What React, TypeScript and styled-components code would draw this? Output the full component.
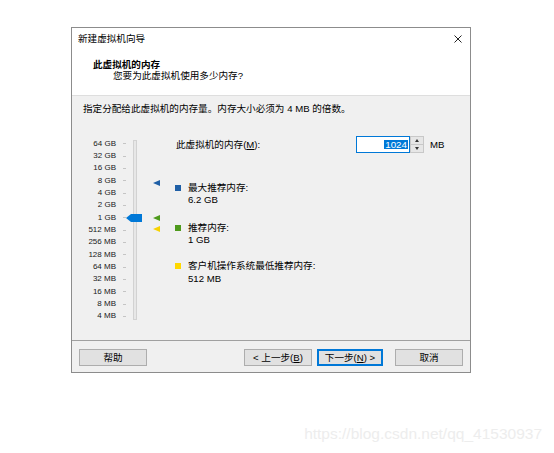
import styled, { createGlobalStyle } from "styled-components";

const GlobalStyle = createGlobalStyle`
  html, body {
    margin: 0;
    padding: 0;
    background: #fff;
  }
  body {
    font-family: "Liberation Sans", "Noto Sans CJK SC", sans-serif;
    font-size: 9.6px;
    color: #000;
  }
`;

const Page = styled.div`
  width: 554px;
  height: 453px;
  box-sizing: border-box;
  padding: 27px 0 0 71px;
  display: flex;
  flex-direction: column;
  overflow: hidden;
`;

const Dialog = styled.div`
  width: 400px;
  height: 346px;
  box-sizing: border-box;
  border: 1px solid #8c8c8c;
  background: #fff;
  display: flex;
  flex-direction: column;
`;

const TitleBar = styled.div`
  height: 21px;
  display: flex;
  align-items: center;
  padding: 0 8px 0 6px;
  line-height: 12px;
  flex-shrink: 0;
`;

const CloseIcon = styled.svg`
  margin-left: auto;
  width: 8px;
  height: 8px;
`;

const Header = styled.div`
  height: 47px;
  box-sizing: border-box;
  border-bottom: 1px solid #dedede;
  padding: 10px 0 0 21px;
  flex-shrink: 0;
`;

const HeaderTitle = styled.div`
  font-weight: bold;
  line-height: 11px;
`;

const HeaderSub = styled.div`
  line-height: 11px;
  padding-left: 20px;
`;

const Body = styled.div`
  height: 244px;
  flex-shrink: 0;
  box-sizing: border-box;
  background: #f0f0f0;
  padding: 6px 0 0 11px;
`;

const Instruction = styled.div`
  line-height: 14px;
`;

const Main = styled.div`
  display: flex;
  margin-top: 14px;
`;

const Slider = styled.div`
  position: relative;
  width: 92px;
  flex-shrink: 0;
  display: flex;
  align-items: flex-start;
`;

const Labels = styled.div`
  width: 33px;
  padding-top: 7.8px;
  display: flex;
  flex-direction: column;
`;

const ScaleLabel = styled.div`
  height: 12.34px;
  line-height: 12.34px;
  font-size: 8px;
  text-align: right;
  color: #1a1a1a;
  white-space: nowrap;
`;

const Ticks = styled.div`
  width: 3px;
  margin-left: 7px;
  padding-top: 7.8px;
  display: flex;
  flex-direction: column;
`;

const Tick = styled.div`
  height: 12.34px;
  display: flex;
  align-items: center;
  &::before {
    content: "";
    width: 3px;
    height: 1px;
    background: #c4c4c4;
  }
`;

const Track = styled.div`
  width: 4px;
  height: 180px;
  margin: 10px 0 0 7px;
  box-sizing: border-box;
  background: #e7e7e7;
  border: 1px solid #d2d2d2;
`;

const Thumb = styled.svg`
  position: absolute;
  left: 43px;
  width: 16px;
  height: 8px;
`;

const Marker = styled.svg`
  position: absolute;
  left: 70px;
  width: 7px;
  height: 6px;
`;

const Panel = styled.div`
  flex: 1;
  display: flex;
  flex-direction: column;
`;

const MemRow = styled.div`
  display: grid;
  grid-template-columns: 181px 54px 14px auto;
  align-items: center;
  height: 17px;
  margin-top: 6px;
`;

const MemLabel = styled.div`
  padding-left: 1px;
  line-height: 12px;
`;

const U = styled.span`
  text-decoration: underline;
`;

const Input = styled.div`
  height: 17px;
  box-sizing: border-box;
  border: 1px solid #0078d7;
  background: #fff;
  display: flex;
  align-items: center;
  justify-content: flex-end;
  padding-right: 1px;
`;

const Selected = styled.span`
  background: #0078d7;
  color: #fff;
  line-height: 9.5px;
  font-size: 9.8px;
  padding: 0 1px;
`;

const Spin = styled.div`
  height: 17px;
  display: flex;
  flex-direction: column;
`;

const SpinBtn = styled.div<{ $up?: boolean }>`
  flex: 1;
  box-sizing: border-box;
  background: #e6e6e6;
  border: 1px solid #c8c8c8;
  border-top-width: ${(p) => (p.$up ? "1px" : "0")};
  display: flex;
  align-items: center;
  justify-content: center;
  &::before {
    content: "";
    border-left: 2.5px solid transparent;
    border-right: 2.5px solid transparent;
    ${(p) =>
      p.$up
        ? "border-bottom: 3px solid #333;"
        : "border-top: 3px solid #333;"}
  }
`;

const Unit = styled.div`
  margin-left: 6px;
  line-height: 12px;
`;

const LegendItem = styled.div<{ $top: number }>`
  display: flex;
  gap: 7px;
  margin-top: ${(p) => p.$top}px;
`;

const Swatch = styled.div<{ $color: string }>`
  width: 6px;
  height: 6px;
  margin-top: 3px;
  background: ${(p) => p.$color};
  flex-shrink: 0;
`;

const LegendText = styled.div`
  line-height: 12.4px;
`;

const Footer = styled.div`
  height: 32px;
  flex-shrink: 0;
  box-sizing: border-box;
  border-top: 1px solid #a0a0a0;
  background: #f0f0f0;
  display: flex;
  align-items: flex-start;
  padding: 8px 7px 0 7px;
`;

const Button = styled.div<{ $w: number; $gap?: number; $primary?: boolean }>`
  width: ${(p) => p.$w}px;
  height: 17px;
  box-sizing: border-box;
  margin-left: ${(p) => p.$gap ?? 0}px;
  background: #e1e1e1;
  border: 1px solid ${(p) => (p.$primary ? "#0078d7" : "#adadad")};
  box-shadow: ${(p) => (p.$primary ? "inset 0 0 0 1px #0078d7" : "none")};
  display: flex;
  align-items: center;
  justify-content: center;
  line-height: 12px;
  white-space: nowrap;
`;

const Spacer = styled.div`
  flex: 1;
`;

const Watermark = styled.div`
  align-self: flex-end;
  margin: 52px 12px 0 0;
  font-family: "Liberation Sans", Arial, sans-serif;
  font-size: 15.5px;
  line-height: 18px;
  color: #ededed;
`;

const scale = [
  "64 GB",
  "32 GB",
  "16 GB",
  "8 GB",
  "4 GB",
  "2 GB",
  "1 GB",
  "512 MB",
  "256 MB",
  "128 MB",
  "64 MB",
  "32 MB",
  "16 MB",
  "8 MB",
  "4 MB",
];

// slider origin is at page y=130
const sliderTop = 130;
const markers = [
  { y: 182.7, color: "#1f5fa6" },
  { y: 218, color: "#4e9a1c" },
  { y: 229, color: "#f7d200" },
];
const thumbY = 144 + 6 * 12.34;

export default function App() {
  return (
    <Page>
      <GlobalStyle />
      <Dialog>
        <TitleBar>
          新建虚拟机向导
          <CloseIcon viewBox="0 0 8 8">
            <path d="M0.5 0.5 L7.5 7.5 M7.5 0.5 L0.5 7.5" stroke="#222" strokeWidth="1" />
          </CloseIcon>
        </TitleBar>
        <Header>
          <HeaderTitle>此虚拟机的内存</HeaderTitle>
          <HeaderSub>您要为此虚拟机使用多少内存?</HeaderSub>
        </Header>
        <Body>
          <Instruction>指定分配给此虚拟机的内存量。内存大小必须为 4 MB 的倍数。</Instruction>
          <Main>
            <Slider>
              <Labels>
                {scale.map((s) => (
                  <ScaleLabel key={s}>{s}</ScaleLabel>
                ))}
              </Labels>
              <Ticks>
                {scale.map((s) => (
                  <Tick key={s} />
                ))}
              </Ticks>
              <Track />
              {markers.map((m) => (
                <Marker key={m.color} viewBox="0 0 7 6" style={{ top: m.y - sliderTop - 3 }}>
                  <polygon points="0,3 7,0 7,6" fill={m.color} />
                </Marker>
              ))}
              <Thumb viewBox="0 0 16 8" style={{ top: thumbY - sliderTop - 4 }}>
                <polygon points="0,4 5,0 16,0 16,8 5,8" fill="#0078d7" />
              </Thumb>
            </Slider>
            <Panel>
              <MemRow>
                <MemLabel>
                  此虚拟机的内存(<U>M</U>):
                </MemLabel>
                <Input>
                  <Selected>1024</Selected>
                </Input>
                <Spin>
                  <SpinBtn $up />
                  <SpinBtn />
                </Spin>
                <Unit>MB</Unit>
              </MemRow>
              <LegendItem $top={29}>
                <Swatch $color="#1f5fa6" />
                <LegendText>
                  最大推荐内存:
                  <br />
                  6.2 GB
                </LegendText>
              </LegendItem>
              <LegendItem $top={15.2}>
                <Swatch $color="#4e9a1c" />
                <LegendText>
                  推荐内存:
                  <br />1 GB
                </LegendText>
              </LegendItem>
              <LegendItem $top={13.6}>
                <Swatch $color="#ffd800" />
                <LegendText>
                  客户机操作系统最低推荐内存:
                  <br />
                  512 MB
                </LegendText>
              </LegendItem>
            </Panel>
          </Main>
        </Body>
        <Footer>
          <Button $w={68}>帮助</Button>
          <Spacer />
          <Button $w={68}>
            &lt; 上一步(<U>B</U>)
          </Button>
          <Button $w={66} $gap={5} $primary>
            下一步(<U>N</U>) &gt;
          </Button>
          <Button $w={68} $gap={12}>
            取消
          </Button>
        </Footer>
      </Dialog>
      <Watermark>https://blog.csdn.net/qq_41530937</Watermark>
    </Page>
  );
}
